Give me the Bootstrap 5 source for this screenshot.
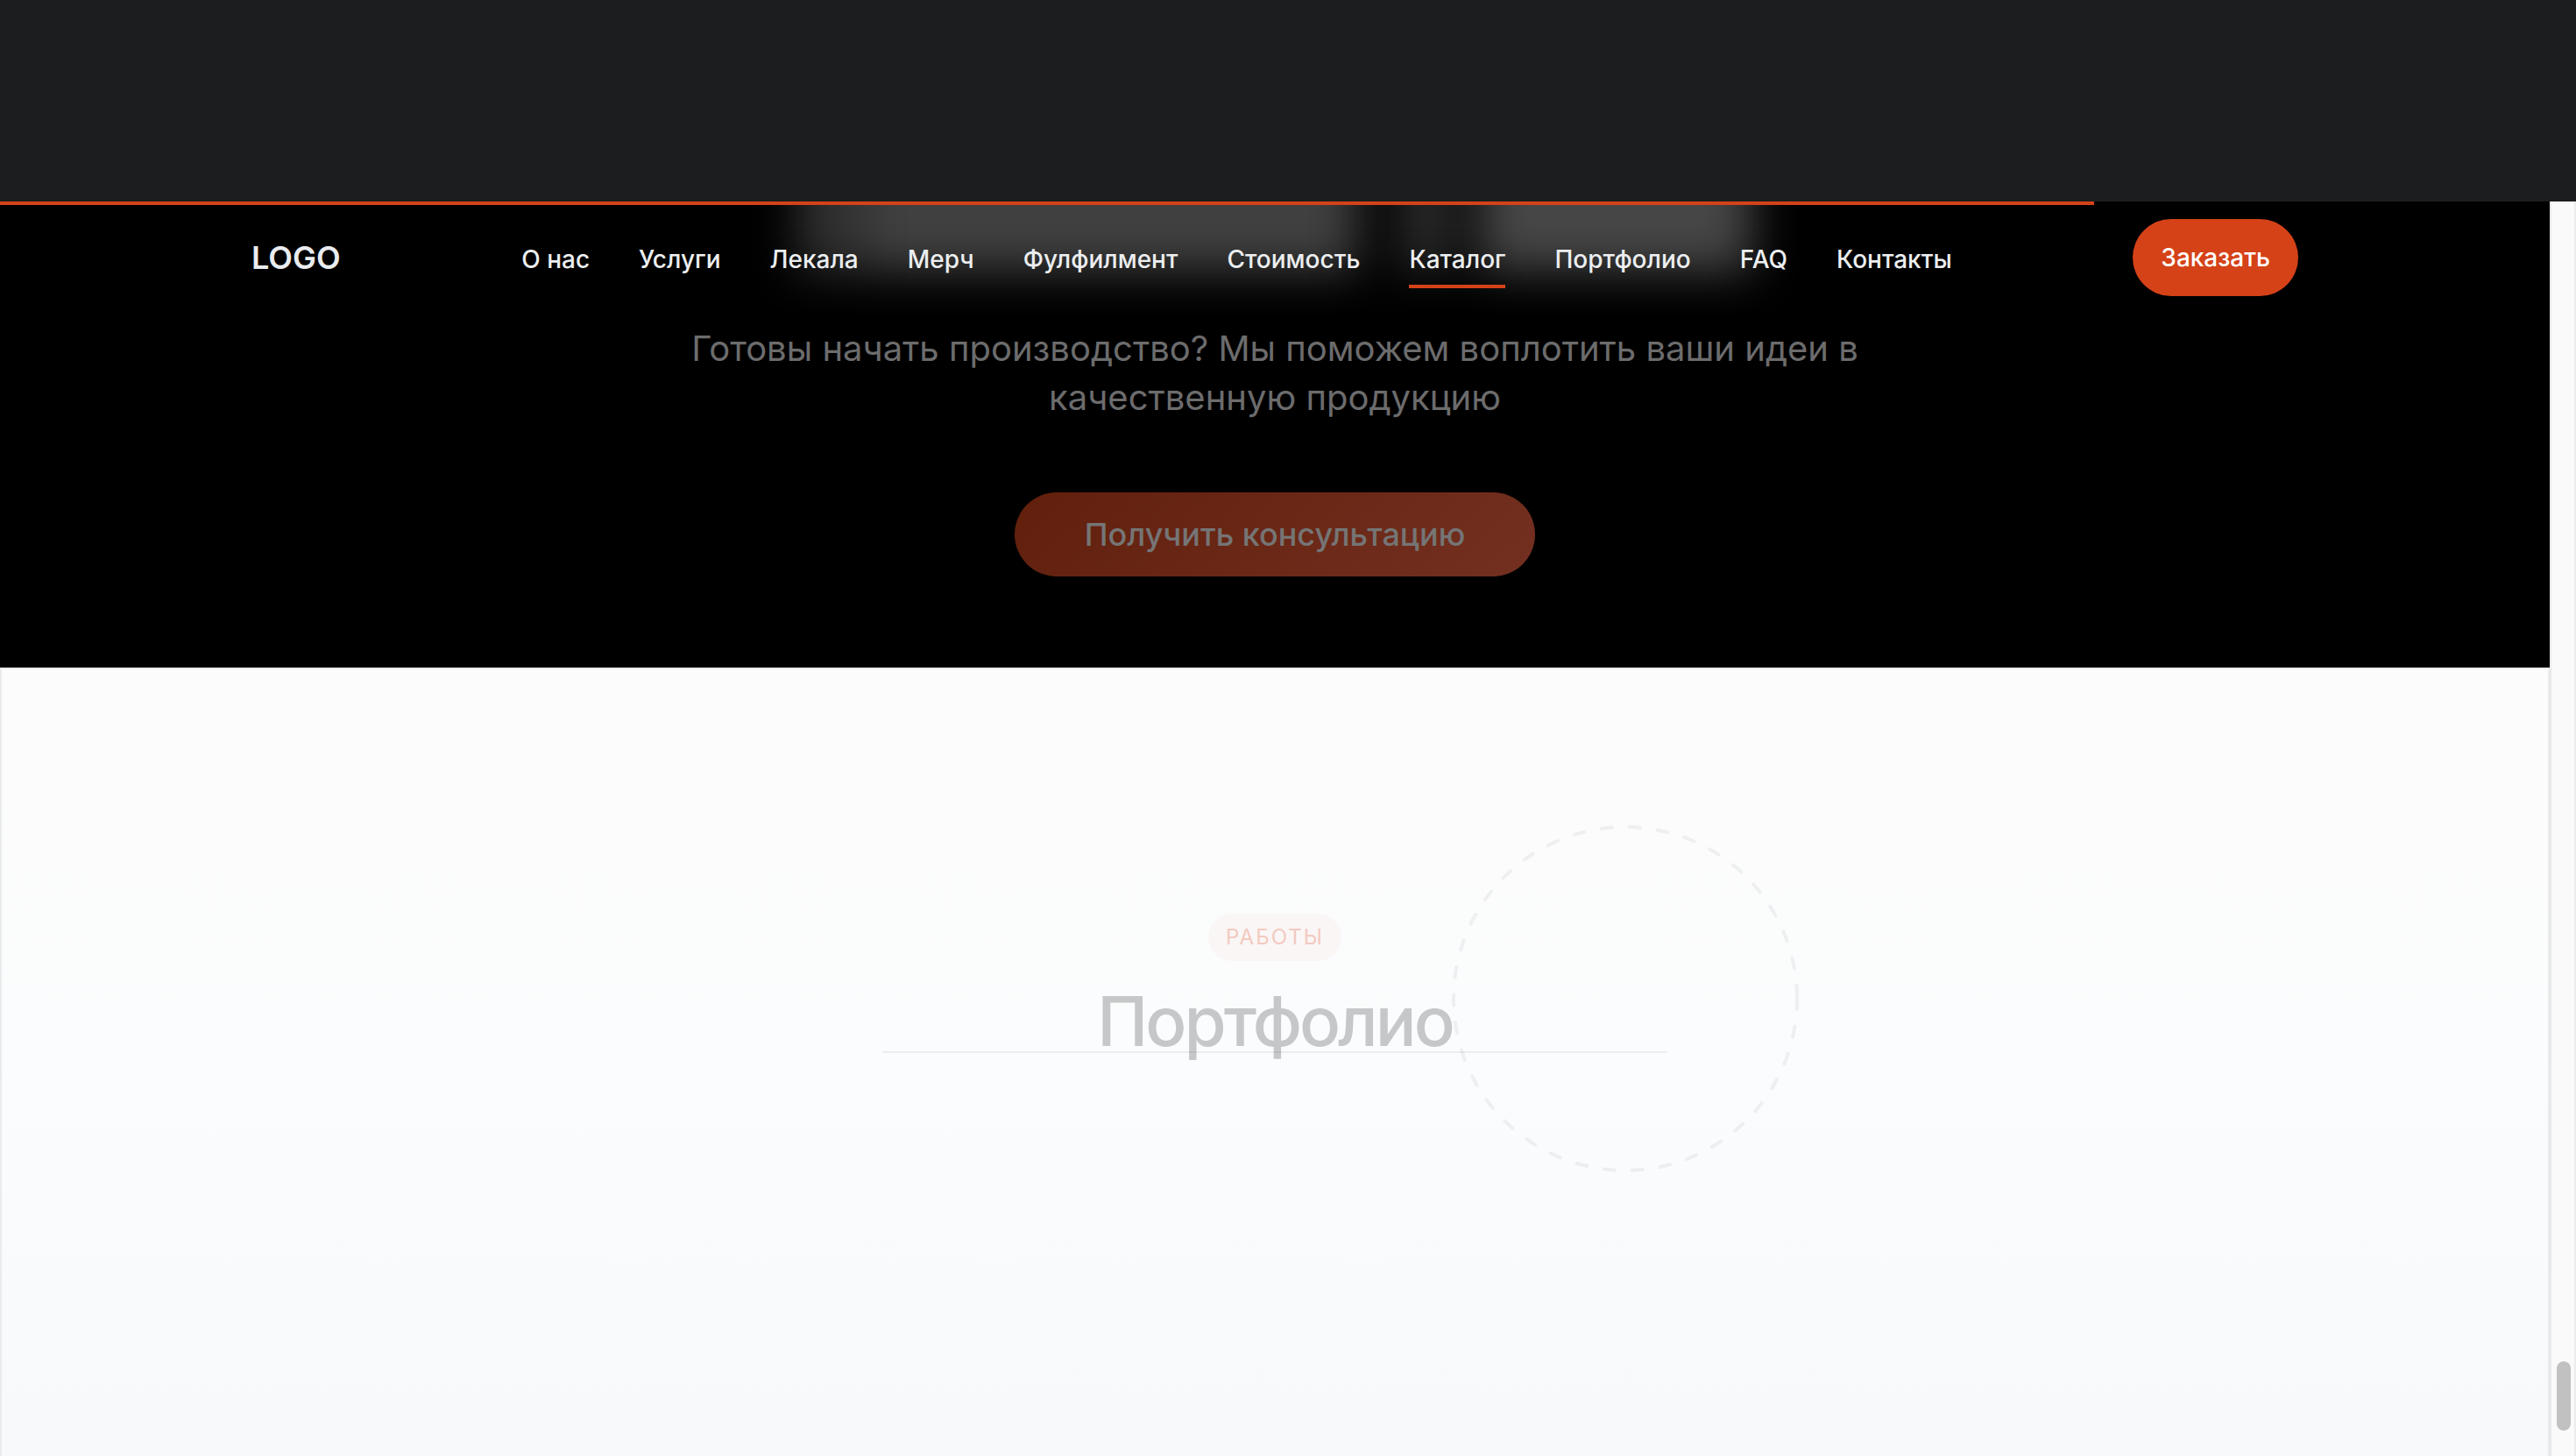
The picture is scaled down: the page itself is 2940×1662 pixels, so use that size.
<!DOCTYPE html>
<html lang="ru">
<head>
<meta charset="utf-8">
<meta name="viewport" content="width=device-width, initial-scale=1">
<title>Портфолио</title>
<link href="https://cdn.jsdelivr.net/npm/bootstrap@5.3.0/dist/css/bootstrap.min.css" rel="stylesheet">
<style>
  :root { --accent: #d54218; }
  body { font-family: Inter, "Liberation Sans", sans-serif; background: #fcfcfc; }
  .top-strip { height: 230px; background: #1b1d1e; }
  .site-nav { height: 128px; background: #000; }
  .nav-inner { max-width: 2400px; padding: 0 32px; }
  .read-progress { height: 4px; background: var(--accent); z-index: 2; }
  .brand { font-size: 36px; font-weight: 600; line-height: 44px; color: #e9ecef; text-decoration: none; }
  .menu { gap: 56px; padding-top: 4px; }
  .menu-link { font-size: 28px; font-weight: 500; line-height: 36px; color: #eceef0; text-decoration: none; }
  .menu-link.current::after { content: ""; position: absolute; left: 0; right: 0; bottom: -15px; height: 4px; background: var(--accent); }
  .order-btn { height: 88px; padding: 0 32px; border: 0; border-radius: 44px; background: var(--accent); color: #fff; font-size: 28px; font-weight: 500; line-height: 36px; }
  /* soft glow of the title sliding under the bar */
  .glow { height: 140px; top: -60px; filter: blur(26px); }
  .glow .g1 { width: 80px; background: #303030; }
  .glow .g2 { width: 560px; background: #404040; }
  .glow .g3 { width: 50px; background: #000; }
  .glow .g4 { width: 50px; background: #303030; }
  .glow .g5 { width: 40px; background: #080808; }
  .glow .g6 { width: 310px; background: #464646; }
  .cta { background: #000; padding: 12px 32px 104px; }
  .cta-text { max-width: 1400px; font-size: 40px; line-height: 56px; color: #6c6c6d; margin-bottom: 80px; }
  .cta-btn { height: 96px; padding: 0 80px; border: 0; border-radius: 48px; color: #757575; font-size: 36px; font-weight: 500; line-height: 44px; background: linear-gradient(135deg, #611f0c, #733021); }
  .works { border: 2px solid #eaebec; border-bottom: 0; padding-top: 279px; background: linear-gradient(#fcfcfc, #fbfcfd 50%, #f7f9fb); }
  .works-head { max-width: 896px; }
  .works-tag { height: 54px; padding: 0 20px; border-radius: 27px; background: #faf6f6; color: #f3cac0; font-size: 24px; font-weight: 400; letter-spacing: 2px; line-height: 54px; }
  .works-title { font-size: 78px; font-weight: 500; line-height: 96px; letter-spacing: -3px; color: #c6c7c8; margin: 21px 0 0; }
  .rule { height: 2px; left: 0; right: 0; top: 157px; background: rgba(0, 0, 0, .06); }
  .ring { width: 400px; height: 400px; left: 648px; top: -103px; }
  .track { width: 30px; background: #fafafa; border-left: 2px solid #e8e8e8; border-right: 2px solid #ececec; padding: 0 4px 29px 6px; }
  .thumb { height: 79px; border-radius: 8px; background: #c1c1c1; }
</style>
</head>
<body>
<div class="min-vh-100 d-flex flex-column">
  <div class="top-strip flex-shrink-0"></div>
  <div class="d-flex flex-grow-1">
    <div class="d-flex flex-column flex-grow-1">
      <header class="site-nav position-relative overflow-hidden">
        <div class="glow position-absolute start-0 end-0 d-flex justify-content-center" aria-hidden="true"><span class="g1"></span><span class="g2"></span><span class="g3"></span><span class="g4"></span><span class="g5"></span><span class="g6"></span></div>
        <div class="read-progress position-absolute top-0 start-0" style="width:82.13%"></div>
        <div class="nav-inner h-100 mx-auto position-relative d-flex align-items-center justify-content-between">
          <a class="brand" href="#">LOGO</a>
          <nav class="menu d-flex">
            <a class="menu-link" href="#about">О нас</a>
            <a class="menu-link" href="#services">Услуги</a>
            <a class="menu-link" href="#patterns">Лекала</a>
            <a class="menu-link" href="#merch">Мерч</a>
            <a class="menu-link" href="#fulfilment">Фулфилмент</a>
            <a class="menu-link" href="#price">Стоимость</a>
            <a class="menu-link current position-relative" href="#catalog">Каталог</a>
            <a class="menu-link" href="#works">Портфолио</a>
            <a class="menu-link" href="#faq">FAQ</a>
            <a class="menu-link" href="#contacts">Контакты</a>
          </nav>
          <button class="order-btn" type="button">Заказать</button>
        </div>
      </header>
      <section class="cta text-center">
        <p class="cta-text mx-auto">Готовы начать производство? Мы поможем воплотить ваши идеи в качественную продукцию</p>
        <button class="cta-btn" type="button">Получить консультацию</button>
      </section>
      <section class="works flex-grow-1" id="works">
        <div class="works-head mx-auto position-relative d-flex flex-column align-items-center">
          <span class="works-tag">РАБОТЫ</span>
          <h2 class="works-title">Портфолио</h2>
          <div class="rule position-absolute"></div>
          <svg class="ring position-absolute" viewBox="0 0 400 400" fill="none" aria-hidden="true"><circle cx="200" cy="200" r="196" stroke="#0f172a" stroke-opacity=".055" stroke-width="4" stroke-linecap="round" stroke-dasharray="12 20"/></svg>
        </div>
      </section>
    </div>
    <div class="track flex-shrink-0 d-flex flex-column justify-content-end"><div class="thumb"></div></div>
  </div>
</div>
<script src="https://cdn.jsdelivr.net/npm/bootstrap@5.3.0/dist/js/bootstrap.bundle.min.js"></script>
</body>
</html>
